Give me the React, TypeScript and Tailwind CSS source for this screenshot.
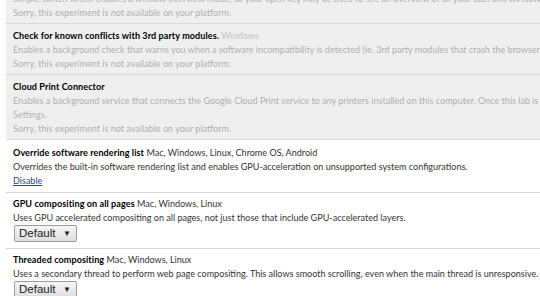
import React from "react";

function Select() {
  return (
    <div className="ml-[1px] flex h-[17px] w-[63px] items-center justify-between rounded-[2px] border border-[#9c9c9c] bg-gradient-to-b from-[#f6f6f6] to-[#dedede] pl-[4px] pr-[5px] font-['Liberation_Sans',sans-serif] text-[11.5px] leading-none text-[#222]">
      <span>Default</span>
      <span className="text-[8px]">▼</span>
    </div>
  );
}

export default function App() {
  return (
    <div className="h-[296px] w-[540px] overflow-hidden bg-white font-['Lato',sans-serif] text-[9.05px] leading-[14px]">
      <div className="ml-[6px] mt-[-27px] w-[900px] whitespace-nowrap">
        {/* Row 1 (cut off) */}
        <div className="border-b border-[#dadada] bg-[#efefef] pb-[3px] pl-[7px] pt-[5px]">
          <div>
            <span className="font-bold tracking-[0.08px] text-black">Overview mode</span>{" "}
            <span className="text-[#c0c0c0]">Chrome OS</span>
          </div>
          <div className="text-[#b0b0b0]">
            Simple switch which enables a window overview mode, so your open key may be used to see an overview of all your tabs and windows in a single view of the screen.
          </div>
          <div className="text-[#b0b0b0]">Sorry, this experiment is not available on your platform.</div>
        </div>

        {/* Row 2 */}
        <div className="border-b border-[#dadada] bg-[#efefef] pb-[3px] pl-[7px] pt-[5px]">
          <div>
            <span className="font-bold tracking-[0.08px] text-black">Check for known conflicts with 3rd party modules.</span>{" "}
            <span className="text-[#c4c4c4]">Windows</span>
          </div>
          <div className="text-[#b0b0b0]">
            Enables a background check that warns you when a software incompatibility is detected (ie. 3rd party modules that crash the browser).
          </div>
          <div className="text-[#b0b0b0]">Sorry, this experiment is not available on your platform.</div>
        </div>

        {/* Row 3 */}
        <div className="border-b border-[#dadada] bg-[#efefef] pb-[3px] pl-[7px] pt-[5px]">
          <div>
            <span className="font-bold tracking-[0.08px] text-black">Cloud Print Connector</span>
          </div>
          <div className="text-[#b0b0b0]">
            Enables a background service that connects the Google Cloud Print service to any printers installed on this computer. Once this lab is enabled, you can turn it on in
          </div>
          <div className="text-[#b0b0b0]">Settings.</div>
          <div className="text-[#b0b0b0]">Sorry, this experiment is not available on your platform.</div>
        </div>

        {/* Row 4 */}
        <div className="border-b border-[#d6d6d6] pb-[4px] pl-[7px] pt-[6px] text-[#333]">
          <div>
            <span className="font-bold tracking-[0.08px] text-black">Override software rendering list</span>{" "}
            <span>Mac, Windows, Linux, Chrome OS, Android</span>
          </div>
          <div>Overrides the built-in software rendering list and enables GPU-acceleration on unsupported system configurations.</div>
          <div>
            <a href="#" className="text-[#2b3f9c] underline">Disable</a>
          </div>
        </div>

        {/* Row 5 */}
        <div className="border-b border-[#d6d6d6] pb-[6px] pl-[7px] pt-[4px] text-[#333]">
          <div>
            <span className="font-bold tracking-[0.08px] text-black">GPU compositing on all pages</span>{" "}
            <span>Mac, Windows, Linux</span>
          </div>
          <div>Uses GPU accelerated compositing on all pages, not just those that include GPU-accelerated layers.</div>
          <Select />
        </div>

        {/* Row 6 */}
        <div className="pb-[6px] pl-[7px] pt-[4px] text-[#333]">
          <div>
            <span className="font-bold tracking-[0.08px] text-black">Threaded compositing</span>{" "}
            <span>Mac, Windows, Linux</span>
          </div>
          <div>Uses a secondary thread to perform web page compositing. This allows smooth scrolling, even when the main thread is unresponsive.</div>
          <Select />
        </div>
      </div>
    </div>
  );
}
